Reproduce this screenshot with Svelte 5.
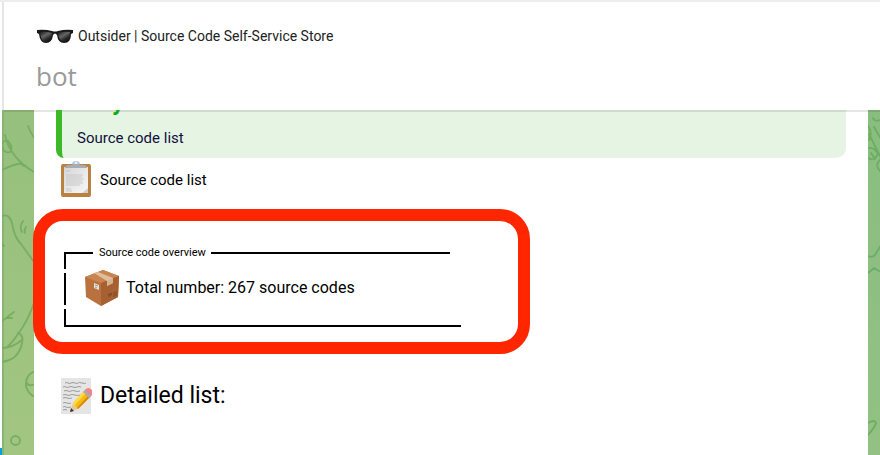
<script>
  const chat = { title: 'Outsider | Source Code Self-Service Store', kind: 'bot' };
  const total = 267;
</script>

<div class="page">
  <header>
    <h1>
      <svg class="glasses" width="38" height="16" viewBox="0 0 38 16" aria-hidden="true">
        <defs>
          <linearGradient id="lens" x1="0" y1="0" x2="0.7" y2="1">
            <stop offset="0" stop-color="#151515" />
            <stop offset="0.45" stop-color="#666" />
            <stop offset="0.75" stop-color="#292929" />
            <stop offset="1" stop-color="#111" />
          </linearGradient>
        </defs>
        <path d="M1 2 Q9 1 16 3 Q19 4 22 3 Q29 1 37 2 L37 5 L35 6 Q35 15 28 15 Q22 15 21 7 Q19 4 17 7 Q16 15 10 15 Q4 15 3 6 L1 5Z" fill="#191919" />
        <path d="M4 4 Q10 3 16 5 Q15 14 10 14 Q5 14 4 4Z" fill="url(#lens)" />
        <path d="M22 5 Q28 3 34 4 Q34 14 28 14 Q23 13 22 5Z" fill="url(#lens)" />
      </svg>
      <span>{chat.title}</span>
    </h1>
    <p>{chat.kind}</p>
  </header>

  <div class="chat">
    <div class="rail"></div>
    <div class="wall left">
      <svg width="32" height="345" viewBox="2 110 32 345" fill="none" stroke="#77ae61" stroke-width="1.8" stroke-linecap="round" aria-hidden="true">
        <path d="M28 126 Q30 132 35 139 M5 135 Q10 158 34 172 M2 170 Q12 165 18 164 Q21 163 24 166 M2 147 Q5 154 10 152 Q14 148 8 141 Q5 139 2 144" />
        <path d="M2 216 Q9 213 12 223 Q14 237 21 244 L34 262 M23 221 Q19 227 22 232 M26 227 Q24 230 25 233 M2 244 L4 246" />
        <path d="M35 300 Q28 321 18 334 Q12 343 6 348 M2 321 L14 312 M6 318 L12 318 M2 348 Q12 348 22 340 M18 333 Q25 335 21 347 Q17 360 2 362" />
        <path d="M35 371 Q25 375 26 386 Q28 394 35 397 M27 383 Q29 387 35 384" />
        <circle cx="15.500" cy="440.500" r="4.500" />
      </svg>
    </div>

    <main>
      <blockquote>
        <strong aria-hidden="true">y</strong>
        <span>Source code list</span>
      </blockquote>

      <p class="line listing">
        <svg width="32" height="38" viewBox="0 0 32 38" aria-hidden="true">
          <defs>
            <linearGradient id="sheet" x1="0" y1="0" x2="1" y2="1">
              <stop offset="0" stop-color="#d6d6d6" />
              <stop offset="1" stop-color="#f8f8f8" />
            </linearGradient>
          </defs>
          <rect x="1" y="3" width="30" height="33" rx="2" fill="#ba813f" />
          <path d="M4 6H28V32H4Z" fill="url(#sheet)" />
          <path d="M22 32L28 27V32Z" fill="#d0d0d0" />
          <path d="M5 7V6Q6 4 9 4H12Q13 1 16 1Q19 1 20 4H23Q26 4 27 6V7Z" fill="#a6adb5" />
          <path d="M12 3Q12 0 16 0Q20 0 20 3Z" fill="#bdcad8" />
          <circle cx="16" cy="2" r="1" fill="#fff" />
          <path d="M6 10H10 M6 14H23 M6 16H22 M6 18H24 M6 20H22 M6 22H23 M6 24H20 M6 28H11 M6 30H12" stroke="#bbb" stroke-width="0.7" />
        </svg>
        <span>Source code list</span>
      </p>

      <section class="highlight">
        <div class="overview">
          <div class="top"><i></i><h2>Source code overview</h2><b></b></div>
          <div class="middle">
            <div class="side"><i></i><i></i><i></i></div>
            <p>
              <svg width="36" height="38" viewBox="0 0 36 38" aria-hidden="true">
                <path d="M1 8L19 1L35 7L34 28L17 37L2 28Z" fill="#b9713d" />
                <path d="M1 8L19 1L35 7L17 14Z" fill="#c9854f" />
                <path d="M17 14L35 7L34 28L17 37Z" fill="#a76032" />
                <path d="M10 4L14 3L29 9V14L23 17V12Z" fill="#dfbd9d" />
                <path d="M23 12L29 9V14L23 17Z" fill="#d5b292" />
                <path d="M10 14L15 16V21L10 19Z" fill="#e5e1da" />
                <path d="M11 16L14 17M11 18L13 19" stroke="#888" stroke-width="0.8" />
                <path d="M24 26L28 24M25 25V28M27 24V27M30 23V28M32 22V27" stroke="#704325" stroke-width="0.8" />
              </svg>
              <span>Total number: {total} source codes</span>
            </p>
          </div>
          <div class="bottom"></div>
        </div>
      </section>

      <h3 class="line">
        <svg width="32" height="38" viewBox="0 0 32 38" aria-hidden="true">
          <rect x="1" y="1" width="30" height="36" fill="#e5e5e5" />
          <path d="M5 6q2-1 3 0t3 0t4 0t3 0t4 0t4 0 M3 10q2-1 3 0t3 0t4 0t4 0t4 0 M4 14q2-1 4 0t3 0t4 0t5 0 M3 18q2-1 4 0t3 0t5 0t5 0 M3 21q2-1 4 0t5 0 M3 26q2-1 4 0t4 0 M3 30q2-1 3 0t5 0 M3 33q2-1 4 0" fill="none" stroke="#888" stroke-width="0.8" />
          <path d="M10 35L13 26L18 32Z" fill="#e8c795" />
          <path d="M10 35L11 31L14 34Z" fill="#333" />
          <path d="M13 26L25 13L31 19L18 32Z" fill="#f5b915" />
          <path d="M13 26L25 13L27 15L14 29Z" fill="#ffdb43" />
          <path d="M17 31L29 18L31 19L18 32Z" fill="#d7840b" />
          <path d="M23 15L26 12L32 18L29 21Z" fill="#a9abae" />
          <path d="M25 13Q28 9 32 13Q34 16 31 19Z" fill="#f1848e" />
        </svg>
        <span>Detailed list:</span>
      </h3>
    </main>

    <div class="wall right">
      <svg width="12" height="345" viewBox="868 110 12 345" fill="none" stroke="#6dad62" stroke-width="1.8" stroke-linecap="round" aria-hidden="true">
        <path d="M873 118Q874 122 880 120M868 126Q873 132 869 140M874 127L881 139M869 134L880 156M868 148Q875 147 878 154Q874 162 868 158M871 153L875 159M880 160Q874 165 880 171M868 256Q872 258 875 255L881 245M868 273L874 268L881 272" />
        <path d="M868 423Q875 419 876 423Q875 427 868 435" />
      </svg>
    </div>
  </div>
</div>

<style>
  :global(body) { margin: 0; background: #fff; }
  .page {
    min-height: 100vh;
    display: flex;
    flex-direction: column;
    box-sizing: border-box;
    border-top: 2px solid #ededed;
    font-family: Roboto, "Liberation Sans", sans-serif;
    color: #111;
  }
  h1, h2, h3, p, blockquote { margin: 0; font-weight: 400; }
  svg { display: block; flex: none; }
  header {
    box-sizing: border-box;
    height: 108px;
    margin-left: 2px;
    padding: 24px 32px 0;
    border-left: 2px solid #e6e6e6;
  }
  h1 {
    display: flex;
    align-items: center;
    gap: 4px;
    font-size: 14px;
    line-height: 20px;
    color: #222;
  }
  header p {
    margin-top: 12px;
    font: 26px/36px "Open Sans", sans-serif;
    color: #999;
  }
  .chat { flex: 1; display: flex; box-shadow: inset 0 2px rgba(0, 0, 0, 0.1); }
  .rail { width: 2px; background: linear-gradient(to top, #099fdc 7px, #fff 7px); }
  .wall { flex: none; overflow: hidden; }
  .left { width: 32px; background: linear-gradient(#95c07d, #a2c681); box-shadow: inset 2px 0 #87b574, inset 0 2px #87ad71; }
  .right { width: 12px; background: linear-gradient(#89bd80, #93c184); box-shadow: inset 0 2px #7bab73; }
  main { flex: 1; min-width: 0; padding: 0 22px; }
  blockquote {
    position: relative;
    height: 48px;
    box-sizing: border-box;
    overflow: hidden;
    padding: 17px 15px 0;
    border-left: 6px solid #3bb927;
    border-radius: 0 0 10px 8px;
    background: #e6f4e3;
    box-shadow: inset 0 2px #cfdccd;
    font-size: 15px;
    line-height: 22px;
    color: #11113d;
  }
  blockquote strong {
    position: absolute;
    left: 50px;
    top: -22px;
    font-size: 24px;
    line-height: 28px;
    color: #0cae0c;
  }
  .line { display: flex; align-items: center; padding-left: 4px; gap: 8px; font-size: 23px; line-height: 38px; color: #000; }
  .listing { margin-top: 3px; font-size: 15px; }
  .highlight {
    box-sizing: border-box;
    max-width: 497px;
    margin: 10px 0 23px -23px;
    padding: 24px 19px 15px;
    border: 12px solid #ff2600;
    border-radius: 30px;
  }
  .overview { color: #000; }
  .top { display: flex; align-items: center; max-width: 386px; height: 16px; }
  .top i { width: 29px; height: 2px; background: #000; }
  .top b { flex: 1; height: 2px; background: #000; }
  h2 { padding: 0 5px 0 6px; font-size: 11px; line-height: 16px; }
  .middle { display: flex; height: 64px; }
  .side { display: flex; flex-direction: column; gap: 4px; width: 2px; margin-top: -8px; }
  .side i { flex: 1; background: #000; }
  .side i:nth-child(2) { flex: 2; }
  .middle p { display: flex; align-items: center; gap: 6px; height: 54px; padding-left: 18px; font-size: 16px; line-height: 24px; }
  .bottom { max-width: 397px; height: 2px; background: #000; }
</style>
